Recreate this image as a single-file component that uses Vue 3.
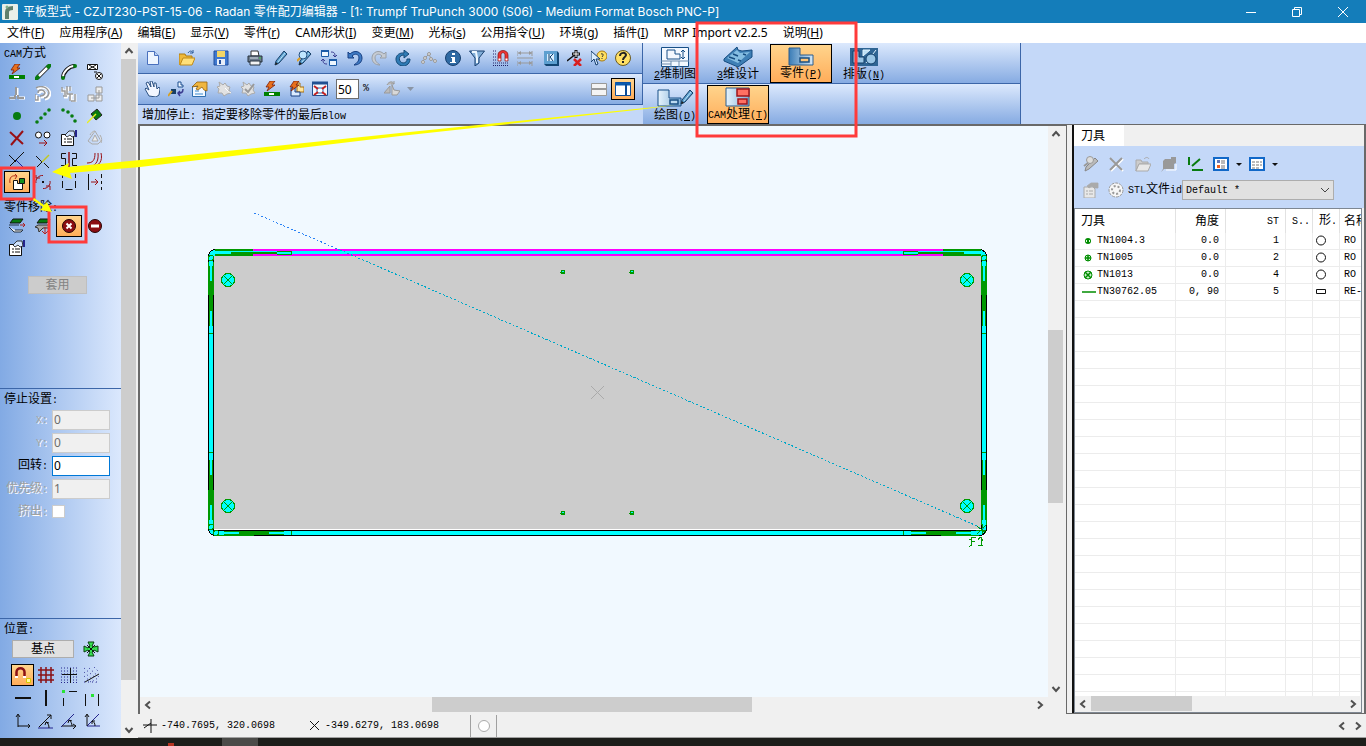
<script setup>
import { h, ref } from 'vue'

// Bitmap-style labels: Latin runs are set in a narrow monospace, "_x" underlines the access key.
const Txt = (props) =>
  h('span', { class: 'txt' }, props.t.split(/([\x20-\x7e]+)/).filter(Boolean).map((run) => {
    if (!/^[\x20-\x7e]+$/.test(run)) return run
    return h('span', { class: 'lat' }, run.split(/(_\w)/).filter(Boolean).map((p) =>
      p[0] === '_' && p.length === 2 ? h('u', p[1]) : p))
  }))
Txt.props = ['t']

const bolt = '<path d="M6 0h5L8 4h3L3 10l2-4H2z" fill="#e8701c" stroke="#7a1c08" stroke-width=".8"/>'
const pen = '<path d="M2 15l1-4 8-10 3 3-8 9z" fill="#5a9fd0" stroke="#173f66"/><path d="M5 12l7-9" stroke="#bfe2f5"/><path d="M2 15l1-3 2 2z" fill="#222"/>'
const clip = (a, b, c) => `<path d="M1 5h9l2 2v9H1z" fill="${b}" stroke="${c}"/><path d="M3 9h2m1 0h4M3 12h2m1 0h4" stroke="${c}"/><path d="M4 4l4-3h7v5h-4L9 4 6 6z" fill="${a}" stroke="${c}" stroke-width=".8"/>`
const icons = {
  doc: '<path d="M2.500 1.500h7l4 4v9h-11z" fill="#eef5ff" stroke="#4a70bd"/><path d="M9.500 1.500v4h4" fill="#b9d0f2" stroke="#4a70bd"/>',
  open: '<path d="M0 15V4h6l1 2h6v3" fill="#efb93a" stroke="#b07c10"/><path d="M1 15l3-7h12l-3 7z" fill="#ffe07a" stroke="#c08a18"/><path d="M9 3c2-3 4-2 5 0m0 0V0m0 3h-3" fill="none" stroke="#2a5a9a"/>',
  save: '<path d="M1 1h14v14H1z" fill="#3f78cf" stroke="#234f9c"/><path d="M4 1h8v6H4z" fill="#f3d566"/><path d="M4 9h8v6H4z" fill="#e8eef8"/><path d="M6 10h2v4H6z" fill="#234f9c"/>',
  print: '<path d="M4 1h7l1 5H4z" fill="#fff" stroke="#333"/><path d="M1 6h14v6H1z" fill="#6c7b8c" stroke="#26323f"/><path d="M3 8h8" stroke="#d7dfe6"/><path d="M3 11h10v4H3z" fill="#f4f4f4" stroke="#26323f"/><path d="M12 8h2" stroke="#3bd040"/>',
  pen,
  penfind: pen + '<circle cx="6" cy="5" r="4" fill="#bfe6ff" stroke="#234f80"/><path d="M3 8L0 11" stroke="#e0a020" stroke-width="2"/>',
  swap: '<path d="M.5.5h7v6h-7zM8.500 9.500h7v6h-7z" fill="#eef7ff" stroke="#1c5ca8"/><path d="M0 1h8M8 10h8" stroke="#1c5ca8" stroke-width="2"/><path d="M10 2c4 0 4 2 4 5m-2-2l2 2 2-2M6 14c-4 0-4-2-4-5m-2 2l2-2 2 2" fill="none" stroke="#3a3c90"/>',
  undo: '<path d="M1 2v6h6L5 6c3-3 7-2 7 2 0 3-2 5-5 7 5 0 8-3 8-7C15 2 8-1 3 4z" fill="#3f7bc4" stroke="#173f82"/>',
  redo: '<path d="M15 2v6H9l2-2C8 3 4 4 4 8c0 3 2 5 5 7-5 0-8-3-8-7C1 2 8-1 13 4z" fill="#c6cbd2" stroke="#9aa0a8"/>',
  refresh: '<path d="M9 0l5 4-5 4V5C3 5 3 12 8 13c3 0 4-2 4-4h3c0 4-3 7-7 7C-2 15-1 2 9 3z" fill="#2f7bb5" stroke="#154a78"/>',
  nodes: '<path d="M1 13l3-5 4-4 2 5 4 2" stroke="#999" fill="none"/><g fill="#ddd" stroke="#999"><circle cx="2" cy="12" r="1.500"/><circle cx="4" cy="8" r="1.500"/><circle cx="8" cy="4" r="1.500"/><circle cx="10" cy="9" r="1.500"/><circle cx="14" cy="11" r="1.500"/></g>',
  info: '<circle cx="8" cy="8" r="7.500" fill="#2f6aa3" stroke="#173f6e"/><path d="M7 3h3v2H7zM6 7h4v5h1v1H5v-1h2V8H6z" fill="#fff"/>',
  filter: '<path d="M.5 1h15L10 8v5l-4 3V8z" fill="#82aed8" stroke="#173f6e"/><path d="M3 2h4l1 6v5" fill="none" stroke="#eef8ff" stroke-width="2"/>',
  magnet: '<path d="M0 1h3M0 4h3M0 7h3M0 10h3M0 13h16M0 15.500h16" stroke="#222266" stroke-dasharray="1 1"/><path d="M5 11V5c0-6 10-6 10 0v6h-3V5c0-3-4-3-4 0v6z" fill="#e33" stroke="#801414" stroke-width=".7"/><path d="M5.500 8.500h2v2h-2zm7 0h2v2h-2z" fill="#fff"/>',
  dims: '<path d="M0 1v5M15 1v5M0 11v5M15 11v5M1 3h14M1 13h14M0 8h16" stroke="#999" fill="none"/><path d="M1 3l3-2v4zM15 3l-3-2v4zM1 13l3-2v4zM15 13l-3-2v4z" fill="#999"/>',
  k: '<path d="M1 1h13v13H1z" fill="#5d9fd0"/><path d="M1 14h13V1l2 2v13H3z" fill="#124674"/><path d="M4 4h7v7H4z" fill="#d9eeff"/><path d="M6 4v7m4-7L7 7l3 4" stroke="#0f3d6b" fill="none"/>',
  delnode: '<path d="M0 11l5-4 4-3" stroke="#111" stroke-width="1.500"/><path d="M9 0v8M5 4h8" stroke="#111" stroke-width="3"/><path d="M9 1v6M6 4h6" stroke="#fff"/><path d="M7 9l7 7m0-7l-7 7" stroke="#d82020" stroke-width="2.500"/>',
  whats: '<circle cx="11" cy="6" r="5" fill="#ffdf60" stroke="#a87b10"/><path d="M10 4c2-1 3 1 1 3m0 1v1" stroke="#333" fill="none"/><path d="M0 1v11l3-3 2 6 2-1-2-5h4z" fill="#d9ecff" stroke="#173f6e"/>',
  help: '<circle cx="8" cy="8" r="7.500" fill="#ffe066" stroke="#6b5a20"/><path d="M5 6c0-4 6-4 6-1 0 2-3 2-3 5m0 1v2" stroke="#222" stroke-width="2" fill="none"/>',
  hand: '<path d="M5 15L1 8l1-1 3 2-3-7 2-1 3 5-1-6h2l2 6V2h2l1 6 2-2 1 2-1 6-3 2z" fill="#f2f6ff" stroke="#2d5283"/>',
  moveshape: '<path d="M10 1v5h5V4h-2V1z" fill="#eef6ff" stroke="#1c4f8f"/><path d="M3 8h5v5H3z" fill="#173f66"/><path d="M0 15l4-5" stroke="#d8a020" stroke-width="2"/><path d="M15 8c0 4-2 4-5 4m2-2l-2 2 2 3" stroke="#3a3c90" fill="none" stroke-width="1.500"/>',
  card: '<path d="M.5 5.500h13v10H.5z" fill="#f4f9ff" stroke="#3070b0"/><path d="M3 10h4M3 13h8" stroke="#3a8ad0"/><path d="M0 6l5-5h10v9l-3-1-2-3-4 3-2-1 2-3z" fill="#efb640" stroke="#94600c" stroke-width=".8"/>',
  gear1: '<path d="M3 1l4 3 2-2 2 3 3 1-1 3 2 3-4 1-3 2-2-3H2l1-4-2-2 3-1z" fill="#e2e2e2" stroke="#aaa"/><path d="M9 7l3 3 3 2" stroke="#fff"/>',
  gear2: '<path d="M3 1l4 3 2-2 2 3 3 1-1 3 2 3-4 1-3 2-2-3H2l1-4-2-2 3-1z" fill="#e2e2e2" stroke="#aaa"/><path d="M5 8l3 3 6-8" stroke="#999" stroke-width="2" fill="none"/>',
  zap: bolt + '<path d="M0 11h16v4H0z" fill="#008000"/><path d="M5 12h5v2H5z" fill="#fff"/>',
  zapshape: '<path d="M9 2h3v4h4v5H9z" fill="#ffe6a0" stroke="#a66e10"/><path d="M3 7h4v4h5v4H3z" fill="#dcecff" stroke="#173f82"/>' + bolt,
  fit: '<path d="M.5 1.500h15v13H.5z" fill="#f4f8ff" stroke="#214f91"/><path d="M0 2h16" stroke="#214f91" stroke-width="3"/><path d="M5 7h6v5H5z" fill="#fff" stroke="#2466b0"/><path d="M2 5l4 3M14 5l-4 3M2 14l4-3M14 14l-4-3" stroke="#c42020" stroke-width="2"/>',
  flip: '<path d="M0 12l6-7v7zM3 4c2-4 6-4 7-1m0 0V0m0 3H7" fill="#bbb" stroke="#999"/><path d="M8 14V4l2 5 6 1-3 4z" fill="#d8d8d8" stroke="#999"/>',
  tri: '<path d="M5 6h7L8.500 10z" fill="#8a95a5"/>',
  panes: '<path d="M.5 2.500h15v12H.5z" fill="#f4f4f4" stroke="#999"/><path d="M0 8h16" stroke="#999" stroke-width="2"/>',
  side: '<path d="M.5 1.500h15v13H.5z" fill="#fff" stroke="#0a4b98"/><path d="M0 3h16" stroke="#0a5bb0" stroke-width="3"/><path d="M11 3v12" stroke="#0a4b98" stroke-width="2"/>',
  seg: '<path d="M2 14L14 2" stroke="#111" stroke-width="4"/><path d="M3 13L13 3" stroke="#fff" stroke-width="2.500"/><path d="M0 16l4-4M12 4l4-4" stroke="#087b10" stroke-width="4"/>',
  arc: '<path d="M2 14C2 8 8 2 14 2" stroke="#111" stroke-width="4" fill="none"/><path d="M2 13C2 8 8 2 13 2" stroke="#fff" stroke-width="2" fill="none"/><circle cx="2" cy="14" r="2" fill="#087b10"/><circle cx="14" cy="2" r="2" fill="#087b10"/>',
  boxes: '<path d="M.5.5h10v5H.5zM2 1l7 4m0-4L2 5" stroke="#111" fill="#fff"/><path d="M7 8h3" stroke="#111"/><circle cx="12" cy="12" r="3.500" fill="#fff" stroke="#111"/><path d="M10 10l4 4m0-4l-4 4" stroke="#111"/>',
  tee: '<path d="M8 2v8M1 12h5m4 0h6" stroke="#fff" stroke-width="3"/><path d="M7 1v8M6 9v3H0m9-3v3h6" stroke="#999" fill="none" stroke-width="2"/>',
  cluster: '<path d="M2 3c5-4 12-1 13 5-1 4-3 5-5 5M4 8c0-4 6-4 7 0-1 3-3 3-5 3M1 9v6h3v-4" stroke="#fff" stroke-width="3" fill="none"/><path d="M1 2c5-3 12-1 13 5-1 4-3 5-5 5M3 7c0-4 6-4 7 0-1 3-3 3-5 3M0 8v6h3v-4" stroke="#999" stroke-width="1.500" fill="none"/>',
  branches: '<path d="M1 2v3h3v4M6 1v8h6M9 1v4M3 11h4m3-2v6m4-7v7h-3" stroke="#fff" stroke-width="3" fill="none"/><path d="M1 1v4h3v4M6 0v8h6M9 0v5M2 10h4m3-2v7m5-7v7h-4" stroke="#999" stroke-width="1.500" fill="none"/>',
  trio: '<path d="M9 1h6v6H9zM1 9h6v6H1zM9 9h6v6H9zM4 12h8M12 4v8" stroke="#999" fill="#eee"/>',
  dot: '<circle cx="8" cy="8" r="4" fill="#087b10"/>',
  dots: '<g fill="#087b10"><circle cx="2" cy="14" r="1.800"/><circle cx="6" cy="10" r="1.800"/><circle cx="10" cy="6" r="1.800"/><circle cx="14" cy="2" r="1.800"/></g>',
  dotarc: '<g fill="#087b10"><circle cx="2" cy="2" r="1.800"/><circle cx="7" cy="4" r="1.800"/><circle cx="11" cy="8" r="1.800"/><circle cx="14" cy="13" r="1.800"/></g>',
  diamond: '<path d="M4 6l6-5 5 6-6 5z" fill="#087b10" stroke="#222"/><path d="M0 15l9-9" stroke="#e8f020" stroke-width="1.500"/>',
  cross: '<path d="M1 2l13 12M14 1L2 15" stroke="#991015" stroke-width="2"/>',
  rings: '<circle cx="3.500" cy="5" r="3" fill="#fff" stroke="#111"/><circle cx="12" cy="5" r="3" fill="#fff" stroke="#111"/><path d="M4 13h8m-3-3l3 3-3 3" stroke="#991015" fill="none"/>',
  props: '<path d="M.5 4.500h12v11H.5z" fill="#fff" stroke="#111"/><path d="M3 9h2m1 0h5M3 12h2m1 0h5" stroke="#111"/><path d="M4 5l4-4h5l1 5-3 1-2-2-3 2z" fill="#cfe3ff" stroke="#111" stroke-width=".8"/><path d="M14 0h2v7h-2z" fill="#24248c"/>',
  tridim: '<path d="M8 1l6 10-3 3H5l-4-3z" fill="none" stroke="#aaa"/><path d="M8 5l-3 6h6zM3 5c1-2 3-4 5-4m5 4c2 3 2 6 1 8" fill="#eee" stroke="#aaa"/>',
  cutx: '<path d="M0 3l7 7m-6 4l6-6 8-8" stroke="#111" fill="none"/><path d="M7 8l8 8" stroke="#1a22a0"/>',
  cuty: '<path d="M1 4l6 6m-5 5l5-5m2 1l5 5" stroke="#111"/><path d="M7 10l7-7" stroke="#c0c820" stroke-width="1.500"/>',
  s52: '<path d="M5 1.500H.5v5h4v7H0M11 1.500h4.500v5h-4v7H16" stroke="#111" fill="none"/><path d="M8 0v16" stroke="#991015" stroke-width="1.500"/>',
  waves: '<path d="M0 11c6 0 8-3 8-10m-8 14c8 0 12-5 11-14M5 15c7-1 11-6 9-14" stroke="#991015" fill="none"/>',
  remove: '<path d="M4.500 6.500h4v3h5v6h-9z" fill="#fff" stroke="#111"/><path d="M10.500 4.500h5v5h-5z" fill="#149020" stroke="#111"/><path d="M1 9C0 3 3 1 8 2M6 0l2 2-2 3" stroke="#b22b15" fill="none"/>',
  rotate: '<path d="M1 9C0 5 4 1 8 1.500m7 5.500c1 4-3 8-7 7.500M1 1v3h4m10 12v-4h-4" stroke="#991015" fill="none"/><path d="M7 7h2v2H7z" fill="#111"/>',
  corners: '<path d="M1.500 0v4m0 3v7m3 1.500h7m3-1.500V7m0-3V0" fill="none" stroke="#111"/>',
  pinch: '<path d="M1.500 0v16M14.500 0v4m0 3v3m0 3v3" stroke="#111"/><path d="M4 8h7M8 5l3 3-3 3" stroke="#991015" fill="none"/>',
  lift: '<path d="M4 1h10l-3 4H1z" fill="#087b10" stroke="#111"/><path d="M0 7h10M0 9l5 5h7l2-2H6" fill="#eee" stroke="#234"/><path d="M11 7h5m-2-2l2 2-2 2" stroke="#b02020" fill="none"/>',
  drop: '<path d="M5 1h10l-3 4H2z" fill="#087b10" stroke="#111"/><path d="M0 9l3-2h11v3H8L4 14l-1-4z" fill="#aaa" stroke="#333"/><path d="M10 9v7m-3-3l3 3 3-3" stroke="#b02020" fill="none"/>',
  stop: '<circle cx="8" cy="8" r="6.500" fill="#8c0d12" stroke="#270404"/><path d="M5.500 5.500l5 5m0-5l-5 5" stroke="#fff" stroke-width="2"/>',
  noentry: '<circle cx="8" cy="8" r="6.500" fill="#8c0d12" stroke="#270404"/><path d="M4 8h8" stroke="#fff" stroke-width="3"/>',
  clover: '<path d="M5 1h6L9 5l2 1 4-1v6l-4-2-2 2 2 4H5l2-4-2-2-4 2V5l4 2 2-2z" fill="#37e052" stroke="#063f0b"/><path d="M4 4l8 8m0-8l-8 8" stroke="#111"/>',
  snap: '<path d="M1.500 10V5c0-5 8-5 8 0v5" fill="none" stroke="#8b1015" stroke-width="2.500"/><path d="M0 9h3v2H0zm8 0h3v2H8z" fill="#fff"/><path d="M11.500 11.500h4v4h-4z" fill="#fff8a0" stroke="#d5c900"/>',
  grid: '<path d="M3 0v16M8 0v16M13 0v16M0 3h16M0 8h16M0 13h16" stroke="#8b1015" stroke-width="1.500"/>',
  dotgrid: '<path d="M0 1h16M0 4h16M0 7h16M0 10h16M0 13h16M0 15.500h16" stroke="#24248c" stroke-dasharray="1 2"/><path d="M9.500 1v15M1 7.500h15" stroke="#111"/>',
  dotray: '<path d="M0 1l15 13M0 5l12 11M0 9l8 7M5 1l10 9M10 0l5 5M0 15h15" stroke="#24248c" stroke-dasharray="1 3"/><path d="M1 15l14-8" stroke="#111"/>',
  hline: '<path d="M0 8h16" stroke="#111" stroke-width="2"/>',
  vline: '<path d="M8 0v16" stroke="#111" stroke-width="2"/>',
  orth: '<path d="M8 1.500h8M2.500 8v8" stroke="#111"/><path d="M1 0h3v3H1z" fill="#29e336"/>',
  para: '<path d="M1.500 4v12M14.500 4v12" stroke="#111"/><path d="M7 4h3v3H7z" fill="#29e336"/>',
  axes: '<path d="M3 14V2m-2 2l2-3 2 3M3 13h12m-2-2l2 2-2 2" stroke="#111" fill="none"/>',
  ang1: '<path d="M0 15h15" stroke="#24248c"/><path d="M1 14L13 2m-4 0h4v4M11 15c0-3-1-5-3-6m-1 3l1-3 3 1" stroke="#111" fill="none"/>',
  ang2: '<path d="M0 14L13 1" stroke="#24248c"/><path d="M1 13h14m-3-2l3 2-3 3M11 13c0-3-1-4-3-6m-1 3l1-3 3 1" stroke="#111" fill="none"/>',
  ang3: '<path d="M3 13L15 1M3 13h13" stroke="#24248c"/><path d="M3 13V2M1 4l2-3 2 3M11 13c0-3-1-4-3-5m0 3V8h3" stroke="#111" fill="none"/>',
  tool: '<path d="M2 15l1-4 9-9 3 3-9 8z" fill="#bbb" stroke="#888"/><circle cx="7" cy="4" r="3.500" fill="#ddd" stroke="#999"/><path d="M1 10l4-3" stroke="#999" stroke-width="2"/>',
  xgray: '<path d="M2 3l12 12M14 3L2 15" stroke="#fff" stroke-width="2"/><path d="M1 2l12 12M13 2L1 14" stroke="#999" stroke-width="2"/>',
  folder: '<path d="M1 15V4h5l1 2h6v2H4z" fill="#ccc" stroke="#aaa"/><path d="M1 15l3-7h12l-3 7z" fill="#e8e8e8" stroke="#aaa"/><path d="M9 3c2-2 4-2 5 0" fill="none" stroke="#aaa"/>',
  pin: '<path d="M4 3h6V1h5v6l-2 1v5H3l-3 3 2-3V5z" fill="#999"/><path d="M15 8v6H5" stroke="#fff" fill="none"/>',
  angle: '<path d="M2 1v8M5 10L13 3M5 14h11" stroke="#087b10" stroke-width="2"/>',
  list1: '<path d="M1 2h14v12H1z" fill="#fff" stroke="#1168c8" stroke-width="2"/><path d="M4 4h3v3H4z" fill="#667ab8"/><path d="M4 9h3v3H4z" fill="#f06020"/><path d="M8 5h4M8 7h4M8 10h4M8 12h4" stroke="#777"/>',
  list2: '<path d="M1 2h14v12H1z" fill="#fff" stroke="#1168c8" stroke-width="2"/><path d="M3 6h3m1 0h3m1 0h2M3 9h3m1 0h3m1 0h2M3 12h3m1 0h3" stroke="#777"/>',
  cardgray: clip('#aaa', '#e8e8e8', '#aaa'),
  wheel: '<circle cx="8" cy="8" r="7" fill="#f7f7f7" stroke="#999" stroke-dasharray="3 1"/><circle cx="8" cy="8" r="4" fill="none" stroke="#999" stroke-width="2" stroke-dasharray="2 2"/>',
  point: '<circle cx="8" cy="8" r="3" fill="#008c00"/><path d="M6 7h1v2H6zm3 0h1v2H9z" fill="#dfd"/>',
  point2: '<circle cx="8" cy="8" r="3" fill="#caf0ca" stroke="#008c00"/><path d="M5 8h6M8 5v6" stroke="#008c00" stroke-width="1.500"/>',
  point3: '<circle cx="8" cy="8" r="4" fill="#caf0ca" stroke="#008c00"/><path d="M5 5l6 6m0-6l-6 6" stroke="#008c00" stroke-width="1.500"/>',
  dash: '<path d="M2 8h14" stroke="#008c00" stroke-width="1.500"/>',
  round: '<circle cx="8" cy="7.500" r="4.500" fill="none" stroke="#111"/>',
  rect: '<path d="M3.500 5.500h9v4h-9z" fill="none" stroke="#111"/>'
}
const big = {
  draft: '<path d="M.5.5h27v19H.5z" fill="#f3f8ff" stroke="#174f87"/><path d="M6 3h8v4h5v5H6zM22 3v9m-2-7l2-2 2 2m-4 5l2 2 2-2" fill="none" stroke="#174f87"/><path d="M0 14h28M10 14v6M0 17h10m8-3v6" stroke="#6c8bad"/>',
  bend: '<path d="M0 12L13 0l1 3 4 1 10-1v7L14 20 0 14z" fill="#3e7fb5" stroke="#154c80"/><path d="M3 11l10-8 3 3 10-1-12 11z" fill="#84bde2"/><path d="M5 10l6 2m-2-5l5 2m5-2l3 1M14 13l3 1" stroke="#154c80" stroke-width="1.500"/>',
  part: '<path d="M2 2h11v7h13v10H2z" fill="url(#steel)" stroke="#2a5c8d"/><path d="M13 12h9v4h-9z" fill="#ffc77b" stroke="#194f83" stroke-width="1.500"/>',
  nest: '<path d="M0 1h28v18H0z" fill="#2f6594"/><path d="M3 4h6v6h5v6H3z" fill="#9ac6e6" stroke="#123f69"/><path d="M13 3h7l-7 6zM16 16L26 3" fill="#bde0f5" stroke="#dff3ff"/><circle cx="21" cy="12" r="5" fill="#9ac6e6" stroke="#123f69"/>',
  draw: '<path d="M-3 2H8v8h12v8H-3z" fill="url(#pale)" stroke="#174f87"/><path d="M9 12h8v4H9z" fill="#bcdaf1" stroke="#194f83" stroke-width="1.500"/>',
  cam: '<path d="M2 1h23v18H2z" fill="url(#pale)" stroke="#2a5c8d"/><path d="M13 2h12v7H13zM14 12h9v5h-9z" fill="#ff7063" stroke="#9e151b" stroke-width="1.500"/>'
}

const menus = [['文件', 'F'], ['应用程序', 'A'], ['编辑', 'E'], ['显示', 'V'], ['零件', 'r'], ['CAM形状', 'I'], ['变更', 'M'], ['光标', 's'], ['公用指令', 'U'], ['环境', 'g'], ['插件', 'I'], ['MRP Import v2.2.5', ''], ['说明', 'H']]
const bar1 = ['doc', '|', 'open', '|', 'save', '|', 'print', ':', 'pen', 'penfind', 'swap', ':', 'undo', 'redo', 'refresh', ':', 'nodes', 'info', 'filter', 'magnet', 'dims', ':', 'k', 'delnode', 'whats', 'help']
const bar2 = ['hand', 'moveshape', 'card', 'gear1', 'gear2', 'zap', 'zapshape', 'fit']
const cam = ['zap', 'seg', 'arc', 'boxes', 'tee', 'cluster', 'branches', 'trio', 'dot', 'dots', 'dotarc', 'diamond', 'cross', 'rings', 'props', 'tridim', 'cutx', 'cuty', 's52', 'waves', 'remove', 'rotate', 'corners', 'pinch']
const removal = ['lift', 'drop', 'stop', 'noentry', 'props']
const snaps = ['snap', 'grid', 'dotgrid', 'dotray', 'hline', 'vline', 'orth', 'para', 'axes', 'ang1', 'ang2', 'ang3']
const fields = [['x', 'X:', '0', true], ['y', 'Y:', '0', true], ['rot', '回转:', '0', false], ['pri', '优先级:', '1', true]]
const modes = [
  [['draft', '_2维制图'], ['bend', '_3维设计'], ['part', '零件(_P)', true], ['nest', '排版(_N)']],
  [['draw', '绘图(_D)'], ['cam', 'CAM处理(_T)', true]]
]
const tools = [
  ['point', 'TN1004.3', '0.0', '1', 'round', 'RO'],
  ['point2', 'TN1005', '0.0', '2', 'round', 'RO'],
  ['point3', 'TN1013', '0.0', '4', 'round', 'RO'],
  ['dash', 'TN30762.05', '0, 90', '5', 'rect', 'RE-'],
  ...Array.from({ length: 24 }, () => null)
]
const zoom = ref('50')
</script>

<template>
  <div class="app">
    <header class="title">
      <svg class="logo" viewBox="0 0 16 16"><rect width="16" height="16" rx="1" fill="#e9efe9" /><path d="M5 15V8c0-3 2-4 6-4" fill="none" stroke="#5f7f6c" stroke-width="4" /><circle cx="5" cy="3" r="1.500" fill="#7fae8c" /></svg>
      <h1>平板型式 - CZJT230-PST-15-06 - Radan 零件配刀编辑器 - [1: Trumpf TruPunch 3000 (S06) - Medium Format Bosch PNC-P]</h1>
      <button aria-label="最小化"><svg viewBox="0 0 12 12"><path d="M1 6.500h10" stroke="#fff" /></svg></button>
      <button aria-label="还原"><svg viewBox="0 0 12 12"><path d="M1.500 3.500h7v7h-7zM3.500 3V1.500h7v7H9" fill="none" stroke="#fff" /></svg></button>
      <button aria-label="关闭"><svg viewBox="0 0 12 12"><path d="M1 1l10 10M11 1L1 11" stroke="#fff" /></svg></button>
    </header>
    <nav class="menu">
      <button v-for="m in menus" :key="m[0]">{{ m[0] }}<template v-if="m[1]">(<u>{{ m[1] }}</u>)</template></button>
    </nav>

    <div class="body">
      <aside class="side">
        <div class="panels">
          <section class="grow">
            <h2><Txt t="CAM方式" /></h2>
            <div class="g26">
              <button v-for="n in cam" :key="n" :aria-label="n" :class="{ on: n === 'remove' }"><svg viewBox="0 0 16 16" v-html="icons[n]" /></button>
            </div>
            <h2 class="h-rem"><Txt t="零件移除:" /></h2>
            <div class="g26">
              <button v-for="n in removal" :key="n" :aria-label="n" :class="{ on: n === 'stop' }"><svg viewBox="0 0 16 16" v-html="icons[n]" /></button>
            </div>
            <button class="push apply" disabled>套用</button>
          </section>
          <section class="stops">
            <h2><Txt t="停止设置:" /></h2>
            <div v-for="f in fields" :key="f[0]" class="field" :class="{ off: f[3] }">
              <label :for="f[0]"><Txt :t="f[1]" /></label>
              <input :id="f[0]" :value="f[2]" :disabled="f[3]">
            </div>
            <div class="field off">
              <label for="eject"><Txt t="挤出:" /></label>
              <input id="eject" type="checkbox" disabled>
            </div>
          </section>
          <section class="pos">
            <h2><Txt t="位置:" /></h2>
            <div class="base">
              <button class="push">基点</button>
              <button class="plain" aria-label="clover"><svg viewBox="0 0 16 16" v-html="icons.clover" /></button>
            </div>
            <div class="g23">
              <button v-for="n in snaps" :key="n" :aria-label="n" :class="{ on: n === 'snap' }"><svg viewBox="0 0 16 16" v-html="icons[n]" /></button>
            </div>
          </section>
        </div>
        <div class="sb v">
          <svg viewBox="0 0 16 16"><path d="M4.500 10L8 6l3.500 4" /></svg>
          <i class="thumb s-thumb" /><i class="s-after" />
          <svg viewBox="0 0 16 16"><path d="M4.500 6L8 10l3.500-4" /></svg>
        </div>
      </aside>

      <div class="work">
        <div class="top">
          <div class="bars">
            <div class="bar">
              <template v-for="(n, i) in bar1" :key="i">
                <i v-if="n === '|'" class="gap-l" /><i v-else-if="n === ':'" class="gap-s" />
                <button v-else :aria-label="n"><svg viewBox="0 0 16 16" v-html="icons[n]" /></button>
              </template>
            </div>
            <div class="bar second">
              <button v-for="n in bar2" :key="n" :aria-label="n"><svg viewBox="0 0 16 16" v-html="icons[n]" /></button>
              <input id="zoom" v-model="zoom" class="pct"><label for="zoom" class="lat">%</label>
              <button class="flip" aria-label="flip"><svg viewBox="0 0 16 16" v-html="icons.flip" /></button>
              <button class="narrow" aria-label="flip menu"><svg viewBox="0 0 16 16" v-html="icons.tri" /></button>
              <i class="fill" />
              <button aria-label="panes"><svg viewBox="0 0 16 16" v-html="icons.panes" /></button>
              <button class="on" aria-label="side pane"><svg viewBox="0 0 16 16" v-html="icons.side" /></button>
            </div>
            <p class="msg"><Txt t="增加停止: 指定要移除零件的最后Blow" /></p>
          </div>
          <div class="modes">
            <div v-for="(row, i) in modes" :key="i" class="mrow">
              <button v-for="m in row" :key="m[0]" :class="{ on: m[2] }">
                <svg viewBox="0 0 28 20">
                  <defs>
                    <linearGradient id="steel"><stop stop-color="#3a7cb6" /><stop offset="1" stop-color="#d5e8f7" /></linearGradient>
                    <linearGradient id="pale"><stop stop-color="#e6f3fc" /><stop offset="1" stop-color="#7fb0d8" /></linearGradient>
                  </defs>
                  <g v-html="big[m[0]]" />
                  <g v-if="m[0] === 'draw'" transform="translate(18 1)" v-html="icons.pen" />
                </svg>
                <Txt :t="m[1]" />
              </button>
            </div>
          </div>
        </div>

        <div class="split">
          <main class="view">
            <svg class="drawing" viewBox="140 126 908 571" shape-rendering="crispEdges">
              <rect x="208.500" y="249.500" width="778" height="286" rx="7" fill="#0ff" stroke="#000" />
              <rect x="214" y="256" width="767" height="274" fill="#ccc" />
              <path d="M213.500 256v274.500h768V256" fill="none" stroke="#000" />
              <path d="M214 529.500h767" stroke="#fff" />
              <path d="M253 250h690M253 255h690" stroke="#f0f" stroke-width="2" />
              <g stroke="#009900" fill="none">
                <path d="M215 250h38M215 255h38M231 253h46M943 250h38M943 255h38M918 253h46" stroke-width="2" />
                <path d="M277 251.500h14M277 254.500h14M904 251.500h14M904 254.500h14" />
                <path d="M291.500 251v4M903.500 251v4M291.500 531v4M903.500 531v4M209 333.500h4M209 452.500h4M982 333.500h4M982 452.500h4" />
                <path d="M208.500 262v33M213.500 262v33M209.500 266v60M212.500 266v60M208.500 490v35M213.500 490v35M209.500 460v60M212.500 460v60M986.500 262v33M981.500 262v33M985.500 266v60M982.500 266v60M986.500 490v35M981.500 490v35M985.500 460v60M982.500 460v60" />
                <path d="M211 281v30M211 475v30M984 281v30M984 475v30M239 533h30M926 533h30" stroke-width="2" />
                <path d="M216 535.500h38M224 531.500h60M224 534.500h60M911 531.500h60M911 534.500h60M941 535.500h38" />
                <circle cx="211" cy="258" r="2.500" /><circle cx="984" cy="258" r="2.500" /><circle cx="211" cy="527" r="2.500" /><circle cx="216" cy="533" r="2.500" />
                <path d="M977 526l9 7m0-8l-9 9m5-10v10m-6-4h10" />
              </g>
              <g v-for="p in [[228, 280], [967, 280], [228, 506], [967, 506]]" :key="p.join()" stroke="#009900">
                <circle :cx="p[0]" :cy="p[1]" r="6.500" fill="#0ff" /><path :d="`M${p[0] - 4} ${p[1] - 4}l8 8m0-8l-8 8`" />
              </g>
              <g v-for="p in [[563, 272], [632, 272], [563, 513], [632, 513]]" :key="p.join()" stroke="#009900">
                <circle :cx="p[0]" :cy="p[1]" r="2" fill="#0ff" /><path :d="`M${p[0] - 3} ${p[1]}h5`" />
              </g>
              <path d="M591 386l13 13m0-13l-13 13" stroke="#aaa" />
              <path d="M254 213l86 37" stroke="#2a82f5" stroke-dasharray="2 2" />
              <path d="M340 250l644 279" stroke="#00a8c8" stroke-dasharray="2 2" />
              <path d="M976 537.500h-4l-1 2v6m0-4h4m-6-2h2m0 6l-2 1M978 539.500l2-2h1v8m-3 0h5m-2-3l2-3" fill="none" stroke="#009900" />
            </svg>
            <div class="sb v">
              <svg viewBox="0 0 16 16"><path d="M4.500 10L8 6l3.500 4" /></svg>
              <i class="v-before" /><i class="thumb v-thumb" /><i class="v-after" />
              <svg viewBox="0 0 16 16"><path d="M4.500 6L8 10l3.500-4" /></svg>
            </div>
            <div class="sb hz">
              <svg viewBox="0 0 16 16"><path d="M10 4.500L6 8l4 3.500" /></svg>
              <i class="h-before" /><i class="thumb h-thumb" /><i class="h-after" />
              <svg viewBox="0 0 16 16"><path d="M6 4.500L10 8l-4 3.500" /></svg>
            </div>
          </main>

          <section class="tools">
            <div class="tabs"><button>刀具</button></div>
            <div class="tbar">
              <div class="trow">
                <button v-for="n in ['tool', 'xgray', 'folder', 'pin', 'angle', 'list1']" :key="n" :aria-label="n"><svg viewBox="0 0 16 16" v-html="icons[n]" /></button>
                <button class="caret" aria-label="list menu"><svg viewBox="0 0 16 16"><path d="M5 7h6l-3 3z" fill="#111" /></svg></button>
                <button aria-label="columns"><svg viewBox="0 0 16 16" v-html="icons.list2" /></button>
                <button class="caret" aria-label="columns menu"><svg viewBox="0 0 16 16"><path d="M5 7h6l-3 3z" fill="#111" /></svg></button>
              </div>
              <div class="trow lower">
                <button v-for="n in ['cardgray', 'wheel']" :key="n" :aria-label="n"><svg viewBox="0 0 16 16" v-html="icons[n]" /></button>
                <label for="stl"><Txt t="STL文件id" /></label>
                <div class="sel"><select id="stl"><option>Default *</option></select><svg viewBox="0 0 16 16"><path d="M4 6l4 4 4-4" /></svg></div>
              </div>
            </div>
            <div class="tablebox">
              <div class="clip">
                <table>
                  <colgroup><col class="c1"><col class="c2"><col class="c3"><col class="c4"><col class="c4"><col></colgroup>
                  <thead><tr><th>刀具</th><th class="r">角度</th><th class="r"><Txt t="ST" /></th><th><Txt t="S.." /></th><th><Txt t="形." /></th><th class="last">名称</th></tr></thead>
                  <tbody>
                    <tr v-for="(t, i) in tools" :key="i">
                      <template v-if="t">
                        <td class="name"><svg viewBox="0 0 16 16" v-html="icons[t[0]]" />{{ t[1] }}</td>
                        <td class="r">{{ t[2] }}</td><td class="r">{{ t[3] }}</td><td />
                        <td class="shape"><svg viewBox="0 0 16 16" v-html="icons[t[4]]" /></td><td class="last">{{ t[5] }}</td>
                      </template>
                      <template v-else><td v-for="c in 6" :key="c" /></template>
                    </tr>
                  </tbody>
                </table>
              </div>
              <div class="sb hz">
                <svg viewBox="0 0 16 16"><path d="M10 4.500L6 8l4 3.500" /></svg>
                <i class="thumb t-thumb" /><i class="t-after" />
                <svg viewBox="0 0 16 16"><path d="M6 4.500L10 8l-4 3.500" /></svg>
              </div>
            </div>
          </section>
        </div>

        <footer class="status">
          <svg viewBox="0 0 16 16"><path d="M1 7h14M9 1v14M2 10l7-5" fill="none" stroke="#111" /></svg>
          <span class="lat">-740.7695, 320.0698</span>
          <svg viewBox="0 0 16 16"><path d="M4 3l9 9m0-9l-9 9" stroke="#111" /></svg>
          <span class="lat">-349.6279, 183.0698</span>
          <span class="lamp"><i /></span>
          <i class="fill" />
          <span class="sb"><svg viewBox="0 0 16 16"><path d="M10 4.500L6 8l4 3.500" /></svg><svg viewBox="0 0 16 16"><path d="M6 4.500L10 8l-4 3.500" /></svg></span>
        </footer>
      </div>
    </div>
    <div class="taskbar"><i class="app-red" /><i class="app-win" /></div>

    <svg class="marks" viewBox="0 0 1366 746" preserveAspectRatio="xMinYMin meet">
      <g fill="none" stroke="#ff3b3b" stroke-width="3">
        <rect x="697" y="23" width="159" height="113" /><rect x="1" y="168" width="33" height="31" /><rect x="49" y="207" width="37" height="35" />
      </g>
      <path d="M52 172L69 163l-1 4 72-7 260-27 275-28-30 4-245 27-260 31-70 6 2 6z" fill="#ff0" />
      <path d="M34 198l10 7 3-3 5 10-12-2 3-3-10-7z" fill="#ff0" />
    </svg>
  </div>
</template>

<style>
html, body { margin: 0; overflow: hidden; }
.lat { font-family: "Liberation Mono", monospace; font-size: 10px; }
.txt { white-space: nowrap; }
</style>

<style scoped>
.app { position: relative; display: flex; flex-direction: column; height: 100vh; overflow: hidden; background: #f0f0f0; color: #000; font: 12px/16px "Noto Sans", "Noto Sans CJK SC", sans-serif; }
.app * { box-sizing: border-box; }
button { display: flex; align-items: center; justify-content: center; padding: 0; border: 0; background: none; color: inherit; font: inherit; flex: none; }
h1, h2, p { margin: 0; font: inherit; }
svg { display: block; flex: none; }
button > svg { width: 16px; height: 16px; }
.on { border: 1px solid #000; background: linear-gradient(#ffd48c, #ffad5a); }
.fill { flex: 1; }

.title { display: flex; align-items: center; height: 23px; flex: none; background: #147dba; color: #fff; }
.logo { width: 16px; height: 16px; margin: 0 5px 0 2px; }
.title h1 { flex: 1; white-space: nowrap; overflow: hidden; font-family: Inter, "Noto Sans CJK SC", sans-serif; }
.title button { width: 46px; height: 23px; }
.title button svg { width: 12px; height: 12px; }
.menu { display: flex; gap: 1px; height: 20px; flex: none; background: #fff; }
.menu button { padding: 0 7px; white-space: nowrap; }

.body { display: flex; flex: 1; min-height: 0; }
.side { display: flex; width: 138px; flex: none; }
.panels { display: flex; flex-direction: column; flex: 1; background: linear-gradient(90deg, #82aae4, #dbe8fd); }
.panels h2 { height: 16px; padding-left: 4px; }
.grow { flex: 1; padding-top: 2px; }
.g26 { display: grid; grid-template-columns: repeat(4, 26px); grid-auto-rows: 22px; padding-left: 4px; }
.grow h2.h-rem { padding-top: 6px; height: 22px; }
.g26 button { width: 26px; height: 22px; }
.push { height: 18px; border: 1px solid #adadad; background: #e1e1e1; }
.push:disabled { background: #ccc; border-color: #bfbfbf; color: #838383; }
.apply { width: 59px; margin: 17px 0 0 28px; }
.stops { height: 230px; border-top: 1px solid #3c66a8; padding-top: 2px; }
.stops h2 { margin-bottom: 1px; }
.field { display: flex; align-items: center; height: 23px; }
.field label { width: 48px; text-align: right; }
.field input { width: 58px; height: 20px; margin: 0 0 0 4px; padding: 0 1px; border: 1px solid #0078d7; background: #fff; font: 12px "Noto Sans", sans-serif; }
.field.off label { color: #a0a0a0; text-shadow: 1px 1px #fff; }
.field.off input { background: #f0f0f0; border: 1px solid #ccc; color: #6d6d6d; }
.field.off input[type="checkbox"] { appearance: none; width: 13px; height: 13px; padding: 0; background: #fff; }
.pos { height: 120px; border-top: 1px solid #3c66a8; padding-top: 2px; }
.base { display: flex; align-items: center; gap: 5px; padding: 2px 0 5px 12px; }
.base .push { width: 62px; }
.plain { width: 23px; height: 20px; }
.g23 { display: grid; grid-template-columns: repeat(4, 23px); grid-auto-rows: 23px; padding-left: 11px; }
.g23 button { width: 23px; height: 22px; }

.sb { display: flex; background: #f0f0f0; }
.sb svg { width: 16px; height: 16px; fill: none; stroke: #505050; stroke-width: 2; }
.sb.v { flex-direction: column; width: 17px; }
.thumb { background: #cdcdcd; }
.v .thumb { width: 15px; }
.hz .thumb { height: 15px; }
.s-thumb { flex: 621; } .s-after { flex: 42; }
.v-before { flex: 187; } .v-thumb { flex: 173; } .v-after { flex: 177; }
.h-before { flex: 276; } .h-thumb { flex: 319; } .h-after { flex: 280; }
.t-thumb { flex: 101; } .t-after { flex: 153; }

.work { display: flex; flex-direction: column; flex: 1; min-width: 0; }
.top { display: flex; flex: none; background: #c4d8f8; }
.bars { width: 505px; }
.bar { display: flex; align-items: center; height: 31px; padding-left: 3px; border-right: 1px solid #3c66a8; border-bottom: 1px solid #3c66a8; background: linear-gradient(#dce9fd, #86abe2); }
.bar button { width: 24px; height: 22px; }
.gap-l { width: 10px; } .gap-s { width: 2px; }
.bar.second { padding: 0 7px 0 2px; }
.bar button.narrow { width: 12px; }
.bar .flip { margin-left: 11px; }
.pct { width: 23px; height: 20px; margin: 0 4px; padding: 0 1px; border: 1px solid #6d6d6d; background: #fff; font: 12px "Noto Sans", sans-serif; }
.msg { height: 19px; padding-left: 4px; line-height: 19px; }
.modes { width: 378px; }
.mrow { display: flex; gap: 1px; height: 41px; padding: 1px 0 0 1px; border-bottom: 1px solid #3c66a8; border-right: 1px solid #3c66a8; background: linear-gradient(#dce9fd, #86abe2); }
.mrow + .mrow { height: 40px; border-bottom: 0; }
.mrow button { flex-direction: column; justify-content: flex-end; width: 62px; height: 39px; line-height: 14px; }
.mrow svg { width: 28px; height: 20px; overflow: visible; }

.split { display: flex; flex: 1; min-height: 0; }
.view { display: grid; grid-template: minmax(0, 1fr) 17px / minmax(0, 1fr) 18px; flex: 1; min-width: 0; border-left: 2px solid #696969; border-top: 2px solid #696969; background: #f0f0f0; }
.drawing { width: 100%; height: 100%; background: #f1f9ff; }
.tools { display: flex; flex-direction: column; width: 300px; border: 1px solid #696969; border-right-width: 2px; background: #f0f0f0; padding-left: 7px; box-shadow: inset 5px 0 #f0f0f0, inset 7px 0 #111; }
.tabs { height: 21px; flex: none; }
.tabs button { justify-content: flex-start; width: 50px; height: 21px; padding-left: 7px; background: #fff; }
.tbar { flex: none; height: 62px; padding: 5px 0 0 4px; background: #c4d8f8; }
.trow { display: flex; align-items: center; height: 26px; }
.trow button { width: 26px; height: 24px; }
.trow.lower button { width: 25px; }
.trow .caret { width: 10px; }
.trow label { width: 54px; text-align: center; }
.sel { position: relative; flex: none; width: 152px; }
.sel select { appearance: none; width: 100%; height: 20px; padding: 0 3px; border: 1px solid #adadad; border-radius: 0; background: #e1e1e1; color: #000; font: 10px "Liberation Mono", monospace; }
.sel svg { position: absolute; right: 1px; top: 2px; width: 16px; height: 16px; fill: none; stroke: #444; }
.tablebox { display: flex; flex-direction: column; flex: 1; min-height: 0; margin-right: 2px; border: 1px solid #7e8792; }
.clip { flex: 1; min-height: 0; overflow: hidden; background: #fff; }
table { width: 100%; table-layout: fixed; border-collapse: separate; border-spacing: 0; }
.c1 { width: 101px; } .c2 { width: 50px; } .c3 { width: 60px; } .c4 { width: 27px; }
th { height: 24px; padding: 0 4px 0 6px; border-right: 1px solid #e2e2e2; font-weight: normal; text-align: left; white-space: nowrap; overflow: hidden; }
td { height: 17px; padding: 0 4px 0 5px; border-right: 1px solid #ececec; border-bottom: 1px solid #ececec; font: 10px/16px "Liberation Mono", monospace; white-space: nowrap; overflow: hidden; }
.r, th.r { text-align: right; padding-right: 6px; }
th.last, td.last { padding: 0 0 0 4px; border-right: 0; }
td svg { width: 16px; height: 16px; }
.name svg { display: inline-block; vertical-align: top; margin-right: 1px; }
.shape { padding: 0; }

.status { display: flex; align-items: center; height: 24px; flex: none; padding-left: 4px; border-bottom: 1px solid #a0a0a0; background: #f0f0f0; }
.status svg { width: 16px; height: 16px; }
.status .lat { margin: 0 31px 0 3px; }
.lamp { display: flex; align-items: center; justify-content: center; width: 27px; height: 22px; border: solid #a0a0a0; border-width: 0 1px; }
.lamp i { width: 12px; height: 12px; border: 1px solid #aaa; border-radius: 50%; background: #fff; }
.taskbar { display: flex; align-items: flex-start; height: 8px; flex: none; padding-left: 168px; background: #1d1e1b; }
.app-red { width: 6px; height: 3px; margin: 5px 48px 0 0; background: #b53422; }
.app-win { width: 36px; height: 8px; background: #4b4b49; }
.marks { position: absolute; left: 0; top: 0; width: 100%; height: 100%; pointer-events: none; }
</style>
